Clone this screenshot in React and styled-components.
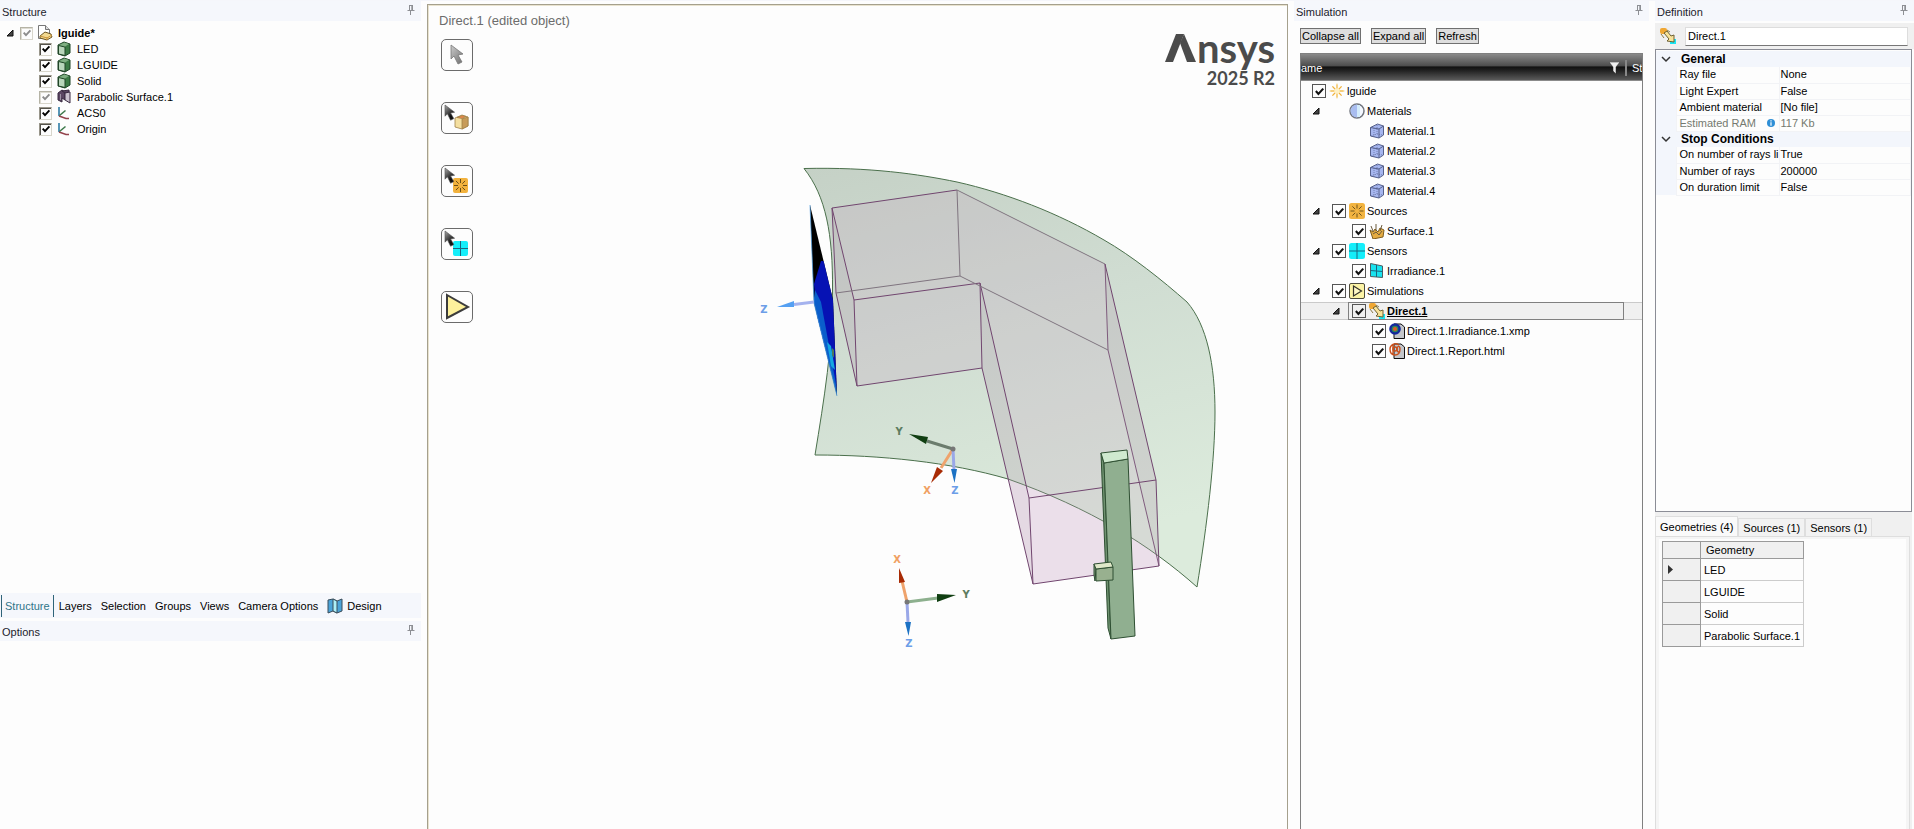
import React, { useState } from 'react'
import styled, { createGlobalStyle } from 'styled-components'

const tick = (color) =>
    `url("data:image/svg+xml,%3Csvg xmlns='http://www.w3.org/2000/svg' viewBox='0 0 10 10'%3E%3Cpath d='M1.7 4.6 4 7.2 8.4 2.4' fill='none' stroke='%23${color}' stroke-width='1.9'/%3E%3C/svg%3E")`

const structureItems = [
    { name: 'LED', icon: 'solid', on: true },
    { name: 'LGUIDE', icon: 'solid', on: true },
    { name: 'Solid', icon: 'solid', on: true },
    { name: 'Parabolic Surface.1', icon: 'surface', on: true, dim: true },
    { name: 'ACS0', icon: 'axis', on: true },
    { name: 'Origin', icon: 'axis', on: true },
]

const simulationItems = [
    { name: 'lguide', icon: 'sun', level: 0, check: true },
    { name: 'Materials', icon: 'materials', level: 1, open: true },
    { name: 'Material.1', icon: 'material', level: 2 },
    { name: 'Material.2', icon: 'material', level: 2 },
    { name: 'Material.3', icon: 'material', level: 2 },
    { name: 'Material.4', icon: 'material', level: 2 },
    { name: 'Sources', icon: 'sources', level: 1, open: true, check: true },
    { name: 'Surface.1', icon: 'crown', level: 2, check: true },
    { name: 'Sensors', icon: 'sensors', level: 1, open: true, check: true },
    { name: 'Irradiance.1', icon: 'irradiance', level: 2, check: true },
    { name: 'Simulations', icon: 'simulations', level: 1, open: true, check: true },
    { name: 'Direct.1', icon: 'direct', level: 2, open: true, check: true, selected: true },
    { name: 'Direct.1.Irradiance.1.xmp', icon: 'xmp', level: 3, check: true },
    { name: 'Direct.1.Report.html', icon: 'report', level: 3, check: true },
]

const definition = [
    {
        title: 'General',
        rows: [
            ['Ray file', 'None'],
            ['Light Expert', 'False'],
            ['Ambient material', '[No file]'],
            ['Estimated RAM', '117 Kb', true],
        ],
    },
    {
        title: 'Stop Conditions',
        rows: [
            ['On number of rays li', 'True'],
            ['Number of rays', '200000'],
            ['On duration limit', 'False'],
        ],
    },
]

const geometries = ['LED', 'LGUIDE', 'Solid', 'Parabolic Surface.1']

const Pin = () => (
    <svg width="8" height="10" viewBox="0 0 8 10" fill="none" stroke="#8d8f94">
        <path d="M2 .5h4M2.5.5v5M5.5.5v5M4.8 1v5M.5 5.5h7M3.5 6v4" />
    </svg>
)

const Expander = () => (
    <svg width="8" height="8" viewBox="0 0 8 8">
        <path d="M7 1v6H1z" fill="#444" stroke="#111" />
    </svg>
)

const rays = (
    <path d="M8 1.5v4M8 10.5v4M1.5 8h4M10.5 8h4M3.4 3.4l2.8 2.8M9.8 9.8l2.8 2.8M12.6 3.4 9.8 6.2M6.2 9.8l-2.8 2.8" />
)

const shapes = {
    doc: (
        <>
            <path d="M1.5.5h7l4 4v9h-11z" fill="#fff" stroke="#777" />
            <path d="M8.5.5v4h4" fill="#ddd" stroke="#777" />
            <path d="M3 11l5-4 6 2 1 3-5 3-7-2z" fill="#f3d98f" stroke="#6b5525" />
            <path d="M3 11l7 2 5-3M10 12v3" fill="none" stroke="#c9933b" />
        </>
    ),
    solid: (
        <>
            <path d="M2 4l6-3 6 2v9l-5 3-7-2z" fill="#3c7a45" stroke="#1f4426" />
            <path d="M2.5 4.5L9 6v8.5L2.5 13z" fill="#b9d6bb" stroke="#1f4426" />
            <path d="M3 4l5.5-2.5L13 3 9 5.5z" fill="#7fae82" />
        </>
    ),
    surface: (
        <>
            <path d="M2 4l4-3 3 2v8l-3-2v4l-4-2z" fill="#5a4662" stroke="#3a2b42" />
            <path d="M6 2l7-1v2L9 4z" fill="#5a4662" stroke="#3a2b42" />
            <path d="M9 4l5-1v11l-5-3z" fill="#cbc2cf" stroke="#3a2b42" />
            <path d="M4.500 5v6" stroke="#9c8fa3" />
        </>
    ),
    axis: (
        <g fill="none" strokeWidth="1.6">
            <path d="M3 2v9" stroke="#2e7ca6" />
            <path d="M3.5 10.5l6-5" stroke="#3e7a4b" />
            <path d="M3 11l7 2.5h3" stroke="#93434c" />
        </g>
    ),
    sun: (
        <>
            <g stroke="#f0b23c" strokeWidth="1.3">{rays}</g>
            <path d="M8 .5v15M.5 8h15" stroke="#f7d78e" />
            <circle cx="8" cy="8" r="2.6" fill="#fff1c4" />
        </>
    ),
    materials: (
        <>
            <circle cx="8" cy="8" r="7" fill="#f4f8ff" stroke="#71757e" strokeWidth="1.5" />
            <path d="M8 1.5a6.5 6.5 0 0 0 0 13z" fill="#a9bdf0" />
            <path d="M8 2h3v12H8z" fill="#d4ecfb" />
        </>
    ),
    material: (
        <g stroke="#56608a" strokeLinejoin="round">
            <path d="M1.500 4.500l7-3.500 6 2v9l-4.500 3-8.500-2z" fill="#a6b6ef" />
            <path d="M1.500 4.500l8.500 1.500 4.500-3M10 6v9" fill="none" />
            <path d="M5 5v9M8 2v9l-6 2M8 11l6 1" fill="none" strokeWidth=".6" strokeDasharray="1 1" />
        </g>
    ),
    sources: (
        <>
            <rect width="16" height="16" rx="2.500" fill="#f2b441" />
            <g stroke="#70541c">{rays}</g>
        </>
    ),
    crown: (
        <>
            <path d="M1 7l3 2 2-3 3 3 2-4 4 2-1 7-10 2z" fill="#e5ac42" stroke="#7d5d20" />
            <path d="M2 3l2 5M7 1v7M13 2l-2 6M4 11l3-2 3 3 3-4" stroke="#6a5a3c" fill="none" />
        </>
    ),
    sensors: (
        <>
            <rect width="16" height="16" rx="2.500" fill="#14eefa" />
            <path d="M8 0v16M0 8h16" stroke="#1b6681" />
        </>
    ),
    irradiance: (
        <>
            <path d="M1.500.5l12 2.500v11.500l-12-1z" fill="#19e3ef" stroke="#4c5c61" />
            <path d="M7.500 2v12M1.500 7.500l12 1" stroke="#1b6681" />
        </>
    ),
    simulations: (
        <>
            <rect x=".5" y=".5" width="15" height="15" rx="1.500" fill="#fcf3a5" stroke="#4c4a3c" />
            <path d="M4.500 3l8 5-8 5z" fill="#fff8c4" stroke="#33312a" strokeWidth="1.200" />
        </>
    ),
    direct: (
        <>
            <rect x="10" y="11" width="6" height="5" fill="#17e6f5" />
            <rect x="0" y="0" width="7" height="6" rx="2" fill="#f0a733" />
            <path d="M4 5l3-2 4 5 3-1v7l-7-1 2-2z" fill="#f8e39a" stroke="#6e6132" />
            <path d="M1 6l3 4M7 2l3 2" stroke="#8a7a45" />
        </>
    ),
    xmp: (
        <>
            <path d="M5 1h7l3.500 3v11.500H5z" fill="#c4c6ca" stroke="#111" />
            <circle cx="6" cy="6" r="5.800" fill="#13289b" />
            <circle cx="6" cy="6" r="3.300" fill="#2f8a55" />
            <circle cx="6" cy="6" r="2" fill="#dd5a2a" />
        </>
    ),
    report: (
        <>
            <path d="M5 1h7l3.500 3v11.500H5z" fill="#c4c6ca" stroke="#111" />
            <g fill="none" stroke="#c9501c" strokeWidth="1.400">
                <circle cx="6" cy="6" r="2" />
                <path d="M10 2C6-1 1 2 1 6s2 6 5 6 5-2 5-6-3-3-3 0 1 3 3 3M4 2v9" />
            </g>
        </>
    ),
    map: (
        <>
            <path d="M1 2l5-1 4 2 5-2v12l-5 2-4-2-5 2z" fill="#4ba3d8" stroke="#3a4d5a" />
            <path d="M6 1l4 2v12l-4-2z" fill="#aef0f8" stroke="#3a4d5a" />
        </>
    ),
}

const Icon = ({ name, size = 16 }) => (
    <svg width={size} height={size} viewBox="0 0 16 16" aria-hidden="true">
        {shapes[name]}
    </svg>
)

const Cursor = ({ dark }) => (
    <path
        d="M0 0v14l3-3 4 8 4-2-4-7 5-1z"
        fill={dark ? 'url(#cursorDark)' : 'url(#cursorGrey)'}
        stroke={dark ? '#555' : '#777'}
        strokeWidth=".8"
    />
)

const tools = [
    { label: 'Select', art: <g transform="translate(10 6)"><Cursor /></g> },
    {
        label: 'Select geometry',
        art: (
            <>
                <g transform="translate(4 3) scale(.8)"><Cursor dark /></g>
                <g stroke="#a08048" strokeWidth=".8">
                    <path d="M14 16l7-3 6 2v9l-6 3-7-2z" fill="#f4dfa0" />
                    <path d="M21 17l6-2v9l-6 3z" fill="#c79b58" />
                    <path d="M16 15.500l5-2 4 1-4 2z" fill="#e8874a" />
                </g>
            </>
        ),
    },
    {
        label: 'Select source',
        art: (
            <>
                <rect x="12" y="13" width="15" height="15" rx="2" fill="#f2b23d" />
                <g transform="translate(11.500 12.500)" stroke="#6b4f18">{rays}</g>
                <g transform="translate(4 3) scale(.8)"><Cursor dark /></g>
            </>
        ),
    },
    {
        label: 'Select sensor',
        art: (
            <>
                <rect x="12" y="13" width="15" height="15" rx="2" fill="#14eefa" />
                <path d="M19.500 13v15M12 20.500h15" stroke="#1b6681" />
                <g transform="translate(4 3) scale(.8)"><Cursor dark /></g>
            </>
        ),
    },
    {
        label: 'Run simulation',
        art: <path d="M6 4l21 12L6 27z" fill="#fdf19c" stroke="#3c3c3c" strokeWidth="2" />,
    },
]

const guideOutline = 'M832 208L957 190 1105 264 1156 480 1159 566 1033 584 982 368 857 386 836 293z'

const Scene = () => (
    <SceneSvg viewBox="429 6 857 823" preserveAspectRatio="xMidYMin meet">
        <defs>
            <linearGradient id="shell" x1="0" y1="0" x2=".25" y2="1">
                <stop offset="0" stopColor="#c5d1c6" />
                <stop offset=".45" stopColor="#d0ddd2" />
                <stop offset="1" stopColor="#dcebdc" />
            </linearGradient>
            <linearGradient id="cursorDark" x1="0" y1="0" x2=".6" y2="1">
                <stop offset="0" stopColor="#aaa" />
                <stop offset=".8" stopColor="#111" />
            </linearGradient>
            <linearGradient id="cursorGrey" x1="0" y1="0" x2=".8" y2="1">
                <stop offset="0" stopColor="#ccc" />
                <stop offset="1" stopColor="#777" />
            </linearGradient>
            <clipPath id="sensorClip">
                <path d="M810 205L833 300 837 396 814 303z" />
            </clipPath>
        </defs>

        {/* part of the guide outside the surface */}
        <path d={guideOutline} fill="#f8f2f8" />

        {/* parabolic surface */}
        <path
            d="M804 168.500C870 167 918 174 957 182 1006 193 1058 213 1104 240 1132 256 1162 280 1187 302 1207 325 1215 365 1215 412 1215 460 1207 525 1197 587 1150 545 1090 508 1008 479 950 462 880 455 815 455 824 400 833 345 832.500 290 833 235 826 196 804 168.500z"
            fill="url(#shell)"
            stroke="#4b704c"
        />

        {/* light guide */}
        <path d={guideOutline} fill="#c5a2c2" fillOpacity=".24" />
        <path d="M832 208L836 293 857 386 854 300zM980 283L1029 498 1033 584 982 368zM1105 264L1156 480 1159 566 1108 350z" fill="#607060" fillOpacity=".05" />
        <g fill="none" stroke="#71466f">
            <path d="M957 190L832 208 836 293 857 386 982 368 1033 584 1159 566 1156 480 1105 264" />
            <path d="M832 208L854 300 857 386M854 300L980 283 982 368M980 283L1029 498 1033 584M1029 498L1156 480" />
            <path d="M1105 264L1108 350 1159 566" strokeOpacity=".85" />
        </g>
        <path d="M836 293L960 276 1108 350M957 190L960 276M957 190L1105 264" fill="none" stroke="#7f747f" />

        {/* LED board */}
        <g stroke="#2e4f32" strokeLinejoin="round">
            <path d="M1101 453L1104 463 1111 639 1108 628z" fill="#6f9270" />
            <path d="M1104 463L1128 459 1135 636 1111 639z" fill="#90af90" />
            <path d="M1101 453L1127 450 1128 459 1104 463z" fill="#cfe9cf" />
            <path d="M1094 564L1096 569 1095 581 1094 575z" fill="#7c9678" />
            <path d="M1096 569L1113 567 1113 580 1096 581z" fill="#98b08f" />
            <path d="M1094 564L1111 562 1113 567 1096 569z" fill="#dfe8c9" />
        </g>

        {/* irradiance map */}
        <g clipPath="url(#sensorClip)">
            <path d="M808 200h32v200h-32z" fill="#000" />
            <path d="M821 261L840 262 840 400 817 318 814 284z" fill="#0612b4" />
            <path d="M815 290L821 302 828 340 836 384 838 400 813 306z" fill="#0a5ecb" />
            <path d="M827 342L831 346 835 370 831 366z" fill="#14a7e0" />
            <path d="M832 348L834 350 834 358 832 355z" fill="#497c5c" />
        </g>
        <path d="M810 205L814 303 837 396" fill="none" stroke="#4b9be0" strokeWidth=".7" />

        <g strokeWidth="3">
            <path d="M814 302L794 304.500" stroke="#a4b2ee" />
            <path d="M953 449L927 441" stroke="#6b7c6d" />
            <path d="M953 449L941 468" stroke="#efa36c" />
            <path d="M953 449L954 470" stroke="#9aa8e8" />
            <path d="M907 602L902 581" stroke="#efa36c" />
            <path d="M907 602L938 598" stroke="#8db08e" />
            <path d="M907 602L908 622" stroke="#9aa8e8" />
        </g>
        <path d="M777 307L794 301 794 307z" fill="#55a0f2" />
        <path d="M909 434L928 437 926 444zM956 595L937 594 937 602z" fill="#103e11" />
        <path d="M931 483L937 467 943 471zM899 568L899 583 905 582z" fill="#a82b05" />
        <path d="M954.500 483L951 469 957 469zM908.500 636L905 622 911 622z" fill="#1c72c4" />
        <circle cx="953" cy="449" r="2.500" fill="#777" />
        <circle cx="907" cy="602" r="2.500" fill="#777" />
        <AxisName x="764" y="313" fill="#6c9ee8">Z</AxisName>
        <AxisName x="899" y="435" fill="#5d7c60">Y</AxisName>
        <AxisName x="927" y="494" fill="#f0a062">X</AxisName>
        <AxisName x="955" y="494" fill="#6c9ee8">Z</AxisName>
        <AxisName x="897" y="563" fill="#f0a062">X</AxisName>
        <AxisName x="966" y="598" fill="#5d7c60">Y</AxisName>
        <AxisName x="909" y="647" fill="#6c9ee8">Z</AxisName>
    </SceneSvg>
)

const PanelHeader = ({ title }) => (
    <Header>
        <Title>{title}</Title>
        <PinButton aria-label={`Pin ${title}`}><Pin /></PinButton>
    </Header>
)

const App = () => {
    const [tab, setTab] = useState('Structure')

    return (
        <Page>
            <GlobalStyle />
            <Panel>
                <PanelHeader title="Structure" />
                <StructureTree>
                    <StructureRow $root>
                        <Toggle><Expander /></Toggle>
                        <StructureLabel $bold>
                            <ClassicCheck type="checkbox" defaultChecked $dim />
                            <Icon name="doc" />
                            lguide*
                        </StructureLabel>
                    </StructureRow>
                    {structureItems.map((item) => (
                        <StructureRow key={item.name}>
                            <StructureLabel>
                                <ClassicCheck type="checkbox" defaultChecked={item.on} $dim={item.dim} />
                                <Icon name={item.icon} />
                                {item.name}
                            </StructureLabel>
                        </StructureRow>
                    ))}
                </StructureTree>
                <PanelTabs>
                    {['Structure', 'Layers', 'Selection', 'Groups', 'Views', 'Camera Options'].map((name) => (
                        <PanelTab key={name} $active={tab === name} onClick={() => setTab(name)}>{name}</PanelTab>
                    ))}
                    <PanelTab $active={tab === 'Design'} onClick={() => setTab('Design')}>
                        <Icon name="map" />Design
                    </PanelTab>
                </PanelTabs>
                <PanelHeader title="Options" />
                <OptionsBody />
            </Panel>

            <Viewport>
                <Scene />
                <Overlay>
                    <div>
                        <Hint>Direct.1 (edited object)</Hint>
                        <Tools>
                            {tools.map((tool) => (
                                <ToolButton key={tool.label} aria-label={tool.label}>
                                    <svg width="32" height="32" viewBox="0 0 32 32">{tool.art}</svg>
                                </ToolButton>
                            ))}
                        </Tools>
                    </div>
                    <Brand>
                        <Wordmark>
                            <svg width="31" height="28" viewBox="0 0 31 28" fill="#4b4b4b">
                                <path d="M11 0h8L8 28H0z" />
                                <path d="M19 0l12 28h-9L15 9z" />
                            </svg>
                            nsys
                        </Wordmark>
                        <Release>2025 R2</Release>
                    </Brand>
                </Overlay>
            </Viewport>

            <Panel>
                <PanelHeader title="Simulation" />
                <Actions>
                    <ActionButton>Collapse all</ActionButton>
                    <ActionButton>Expand all</ActionButton>
                    <ActionButton>Refresh</ActionButton>
                </Actions>
                <SimulationBox>
                    <ColumnHeads>
                        <span>ame</span>
                        <svg width="11" height="12" viewBox="0 0 11 12">
                            <path d="M0 0h11L7 5v7L4 9V5z" fill="#eee" stroke="#222" strokeWidth=".5" />
                        </svg>
                        <StateHead>St</StateHead>
                    </ColumnHeads>
                    {simulationItems.map((item) => (
                        <SimulationRow key={item.name} $level={item.level} $selected={item.selected}>
                            {item.level > 0 && <ExpandSlot>{item.open && <Toggle><Expander /></Toggle>}</ExpandSlot>}
                            <SimulationLabel as={item.check ? 'label' : 'div'} $selected={item.selected}>
                                {item.check ? <FlatCheck type="checkbox" defaultChecked /> : <CheckGap />}
                                <Icon name={item.icon} />
                                <span>{item.name}</span>
                            </SimulationLabel>
                        </SimulationRow>
                    ))}
                </SimulationBox>
            </Panel>

            <Panel>
                <PanelHeader title="Definition" />
                <NameBar>
                    <Icon name="direct" />
                    <NameInput aria-label="Name" defaultValue="Direct.1" />
                </NameBar>
                <PropertyBox>
                    <PropertyTable>
                        <colgroup>
                            <col width="20" />
                            <col width="103" />
                            <col />
                        </colgroup>
                        {definition.map((group) => (
                            <tbody key={group.title}>
                                <tr>
                                    <Gutter>
                                        <svg width="10" height="8" viewBox="0 0 10 8" fill="none" stroke="#333" strokeWidth="1.500">
                                            <path d="M1 2l4 4 4-4" />
                                        </svg>
                                    </Gutter>
                                    <GroupTitle colSpan="2">{group.title}</GroupTitle>
                                </tr>
                                {group.rows.map(([name, value, readOnly]) => (
                                    <tr key={name}>
                                        <Gutter />
                                        <PropertyCell $muted={readOnly} $name>
                                            {name}
                                            {readOnly && (
                                                <InfoMark width="8" height="8" viewBox="0 0 8 8">
                                                    <circle cx="4" cy="4" r="4" fill="#2f8fd6" />
                                                    <path d="M4 1.300v1.200M4 3.200v3.500" stroke="#fff" strokeWidth="1.200" />
                                                </InfoMark>
                                            )}
                                        </PropertyCell>
                                        <PropertyCell $muted={readOnly}>{value}</PropertyCell>
                                    </tr>
                                ))}
                            </tbody>
                        ))}
                    </PropertyTable>
                </PropertyBox>
                <Selections>
                    <SelectionTabs>
                        <SelectionTab $active>Geometries (4)</SelectionTab>
                        <SelectionTab>Sources (1)</SelectionTab>
                        <SelectionTab>Sensors (1)</SelectionTab>
                    </SelectionTabs>
                    <SelectionPage>
                        <SelectionBody>
                            <GeometryTable>
                                <thead>
                                    <tr>
                                        <th aria-label="Current" />
                                        <th>Geometry</th>
                                    </tr>
                                </thead>
                                <tbody>
                                    {geometries.map((name, i) => (
                                        <tr key={name}>
                                            <RowHead>
                                                {i === 0 && (
                                                    <svg width="5" height="9" viewBox="0 0 5 9">
                                                        <path d="M0 0l5 4.500L0 9z" fill="#333" />
                                                    </svg>
                                                )}
                                            </RowHead>
                                            <td>{name}</td>
                                        </tr>
                                    ))}
                                </tbody>
                            </GeometryTable>
                        </SelectionBody>
                    </SelectionPage>
                </Selections>
            </Panel>
        </Page>
    )
}

export default App


// styling
const GlobalStyle = createGlobalStyle`
    * {
        box-sizing: border-box;
    }
    body {
        margin: 0;
        background: #fdfdfd;
        color: #000;
        font-family: "Liberation Sans", Arial, sans-serif;
        font-size: 11px;
        line-height: 16px;
    }
    button, input {
        font: inherit;
        color: inherit;
        margin: 0;
    }
    svg {
        display: block;
        flex: none;
    }
`

const Page = styled.div`
    display: grid;
    grid-template-columns: 421px 1fr 355px 259px;
    column-gap: 6px;
    height: 100vh;
    overflow: hidden;
    border-top: 1px solid #f5f6fb;
`

const Panel = styled.section`
    display: flex;
    flex-direction: column;
    min-width: 0;
    min-height: 0;
`

const Header = styled.header`
    display: flex;
    flex: none;
    align-items: center;
    justify-content: space-between;
    height: 20px;
    padding: 2px 6px 0 2px;
    background: #f5f7fc;
`

const Title = styled.h2`
    margin: 0;
    font-size: 11px;
    font-weight: normal;
    color: #1c1c2c;
`

const PinButton = styled.button`
    padding: 0 0 4px;
    border: none;
    background: none;
`

const StructureTree = styled.div`
    flex: 1;
    padding-top: 4px;
`

const StructureRow = styled.div`
    display: flex;
    align-items: center;
    height: 16px;
    padding-left: ${props => props.$root ? '6px' : '39px'};
`

const Toggle = styled.button`
    width: 14px;
    padding: 0;
    border: none;
    background: none;
`

const StructureLabel = styled.label`
    display: flex;
    align-items: center;
    gap: 4px;
    white-space: nowrap;
    font-weight: ${props => props.$bold ? 'bold' : 'normal'};

    svg {
        margin-right: 1px;
    }
`

const ClassicCheck = styled.input`
    appearance: none;
    width: 13px;
    height: 13px;
    border: 1px solid ${props => props.$dim ? '#b5b3a5' : '#98958a'};
    border-right-color: #d8d6cc;
    border-bottom-color: #d8d6cc;
    background: #fff;
    box-shadow: inset 1px 1px 0 ${props => props.$dim ? '#dddbd2' : '#55534c'};

    &:checked {
        background: ${props => tick(props.$dim ? '8c8c8c' : '000')} center / 10px no-repeat;
    }
`

const PanelTabs = styled.nav`
    display: flex;
    flex: none;
    align-items: center;
    gap: 1px;
    height: 25px;
    margin-bottom: 3px;
    padding-left: 1px;
    background: #f5f7fc;
`

const PanelTab = styled.button`
    display: flex;
    align-items: center;
    gap: 4px;
    height: 22px;
    padding: ${props => props.$active ? '0 3px' : '0 4px'};
    border: solid #2f6479;
    border-width: ${props => props.$active ? '0 1px' : '0'};
    background: none;
    color: ${props => props.$active ? '#2f7489' : '#000'};
    white-space: nowrap;
`

const OptionsBody = styled.div`
    height: 188px;
`

const Viewport = styled.main`
    position: relative;
    min-width: 0;
    margin-top: 3px;
    border: solid #a5a08d;
    border-width: 1px 1px 0;
    box-shadow: inset 1px 1px 0 #e9e3cf;
`

const SceneSvg = styled.svg`
    position: absolute;
    top: 1px;
    left: 1px;
    width: calc(100% - 2px);
`

const AxisName = styled.text`
    font: bold 10px "DejaVu Sans", sans-serif;
    text-anchor: middle;
`

const Overlay = styled.div`
    position: relative;
    display: flex;
    justify-content: space-between;
    padding: 8px 12px 0 11px;
`

const Hint = styled.p`
    margin: 0;
    color: #6c6c6c;
    font-size: 13px;
`

const Tools = styled.div`
    display: flex;
    flex-direction: column;
    gap: 31px;
    padding: 10px 0 0 2px;
`

const ToolButton = styled.button`
    width: 32px;
    height: 32px;
    padding: 0;
    border: 1px solid #6b6b6b;
    border-radius: 5px;
    background: #fdfdfd;

    svg {
        margin: -1px;
    }
`

const Brand = styled.div`
    padding-top: 21px;
    color: #4b4b4b;
    font-family: Lato, sans-serif;
    font-weight: bold;
    text-align: right;
`

const Wordmark = styled.div`
    display: flex;
    align-items: flex-start;
    gap: 1px;
    height: 32px;
    font-size: 40px;
    line-height: 28px;
`

const Release = styled.div`
    padding-top: 4px;
    font-size: 18px;
`

const Actions = styled.div`
    display: flex;
    flex: none;
    gap: 10px;
    padding: 7px 6px 9px;
`

const ActionButton = styled.button`
    height: 16px;
    padding: 0 1px;
    border: 1px solid #707070;
    background: #dedede;
    line-height: 12px;
`

const SimulationBox = styled.div`
    flex: 1;
    margin: 0 6px;
    border: solid #808080;
    border-width: 1px 1px 0;
    overflow: hidden;
`

const ColumnHeads = styled.div`
    display: flex;
    align-items: center;
    height: 27px;
    padding-top: 2px;
    border-bottom: 1px solid #8a8a8a;
    background: linear-gradient(#8a8a8a, #4d4d4d 45%, #111 50%, #1c1c1c 60%, #5a5a5a);
    color: #fff;

    svg {
        margin-left: auto;
    }
`

const StateHead = styled.span`
    width: 17px;
    margin-left: 5px;
    padding-left: 5px;
    border-left: 2px solid #888;
    overflow: hidden;
`

const SimulationRow = styled.div`
    display: flex;
    align-items: center;
    height: ${props => props.$selected ? '18px' : '20px'};
    margin: ${props => props.$selected ? '1px 0' : '0'};
    padding-left: ${props => props.$level ? props.$level * 20 - 9 : 7}px;
    border: solid #cacaca;
    border-width: ${props => props.$selected ? '1px 0' : '0'};
    background: ${props => props.$selected ? '#f0f0f0' : 'none'};
`

const ExpandSlot = styled.span`
    width: 16px;
`

const SimulationLabel = styled.label`
    display: flex;
    flex: 1;
    align-items: center;
    gap: 2px;
    height: 18px;
    margin-right: 18px;
    padding-left: 3px;
    border: 1px solid ${props => props.$selected ? '#808080' : 'transparent'};
    font-weight: ${props => props.$selected ? 'bold' : 'normal'};
    text-decoration: ${props => props.$selected ? 'underline' : 'none'};
`

const FlatCheck = styled.input`
    appearance: none;
    width: 14px;
    height: 14px;
    margin-right: 1px !important;
    border: 1px solid #555;
    background: #fff;

    &:checked {
        background: ${tick('111')} center / 11px no-repeat;
    }
`

const CheckGap = styled.span`
    width: 15px;
`

const NameBar = styled.div`
    display: flex;
    flex: none;
    align-items: center;
    gap: 9px;
    height: 26px;
    margin-top: 2px;
    padding: 0 6px 0 5px;
    background: #f0f0f0;
`

const NameInput = styled.input`
    flex: 1;
    min-width: 0;
    height: 19px;
    padding: 0 2px;
    border: 1px solid #ddd;
    border-bottom-color: #777;
    background: #fff;
`

const PropertyBox = styled.div`
    flex: none;
    height: 463px;
    margin-right: 2px;
    padding-top: 1px;
    border: 1px solid #8b8d96;
`

const PropertyTable = styled.table`
    width: 100%;
    border-collapse: collapse;
    table-layout: fixed;
    line-height: 15px;
`

const Gutter = styled.td`
    padding: 0 0 0 5px;
    background: #f3f6fc;
`

const GroupTitle = styled.th`
    height: 16px;
    padding: 0 5px;
    background: #f3f6fc;
    font-size: 12px;
    text-align: left;
`

const PropertyCell = styled.td`
    height: 16px;
    padding: 0 0 0 ${props => props.$name ? '3px' : '1px'};
    border: 1px solid #f2f3f6;
    border-top: none;
    color: ${props => props.$muted ? '#757a70' : '#000'};
    overflow: hidden;
    white-space: nowrap;
`

const InfoMark = styled.svg`
    float: right;
    margin: 3px 4px 0 0;
`

const Selections = styled.div`
    display: flex;
    flex: 1;
    flex-direction: column;
    margin-right: 2px;
    padding: 4px 2px 0 0;
    background: #f0f0f0;
`

const SelectionTabs = styled.div`
    display: flex;
    align-items: flex-end;
    height: 20px;
`

const SelectionTab = styled.button`
    height: ${props => props.$active ? '20px' : '18px'};
    padding: 0 4px;
    border: 1px solid #dedede;
    border-bottom: none;
    background: ${props => props.$active ? '#fafafa' : '#f2f2f2'};
    white-space: nowrap;
`

const SelectionPage = styled.div`
    flex: 1;
    padding: 2px 3px 0;
    border: 1px solid #dedede;
    border-bottom: none;
    background: #f5f5f5;
`

const SelectionBody = styled.div`
    height: 100%;
    padding: 2px 3px;
    background: #fdfdfd;
`

const GeometryTable = styled.table`
    width: 142px;
    border: 1px solid #9a9a9a;
    border-collapse: collapse;

    th {
        height: 17px;
        padding: 0 5px;
        border: 1px solid #9a9a9a;
        background: #f0f0f0;
        font-weight: normal;
        text-align: left;
    }
    th:first-child {
        width: 40px;
    }
    td {
        height: 22px;
        padding: 0 3px;
        border: 1px solid #ccc;
        white-space: nowrap;
    }
`

const RowHead = styled.th`
    && {
        height: 22px;
    }
`
